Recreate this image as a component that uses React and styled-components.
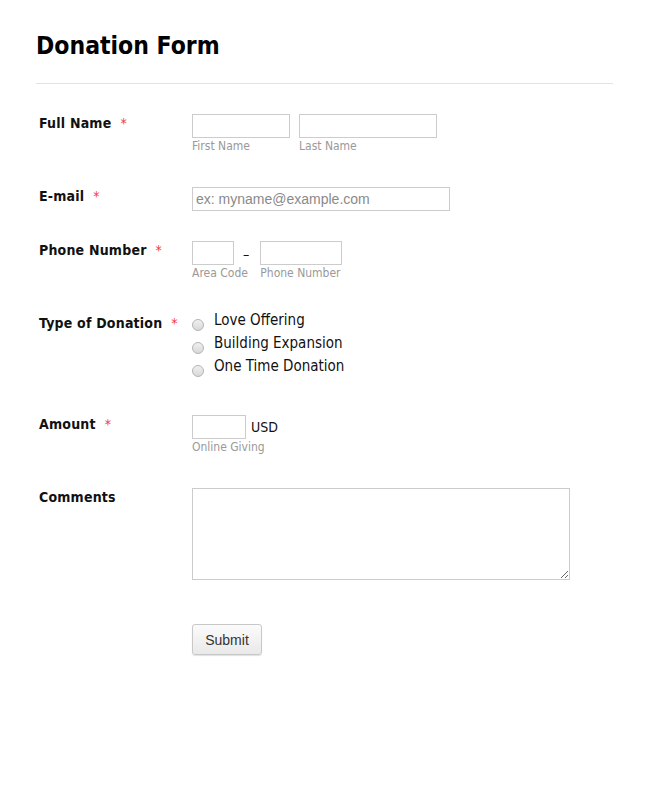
import styled, { createGlobalStyle } from "styled-components"

const Global = createGlobalStyle`
  body {
    margin: 0;
    background: #fff;
    font-family: "DejaVu Sans Condensed", "DejaVu Sans", sans-serif;
    color: #111;
  }
`

const Page = styled.div`
  padding: 29px 37px 0 35px;
`

const Title = styled.h1`
  margin: 0 0 0 1px;
  font-size: 24.5px;
  font-weight: bold;
  line-height: 34px;
  color: #000;
  padding-bottom: 20px;
  border-bottom: 1px solid #e3e3e3;
`

const Fields = styled.div`
  padding-top: 30px;
`

const Row = styled.div`
  display: grid;
  grid-template-columns: 157px 1fr;
  min-height: ${p => p.$h}px;
  align-items: start;
`

const Label = styled.div`
  padding-left: 4px;
  font-size: 14px;
  font-weight: bold;
  letter-spacing: 0.2px;
  line-height: 18px;
  padding-top: ${p => p.$top || 0}px;
  color: #111;
`

const Star = styled.span`
  color: #f23a3c;
  font-weight: normal;
  margin-left: 9px;
`

const Inline = styled.div`
  display: flex;
  align-items: flex-start;
  gap: ${p => p.$gap ?? 9}px;
`

const Stack = styled.div`
  display: flex;
  flex-direction: column;
  width: ${p => (p.$w ? `${p.$w}px` : "auto")};
`

const Input = styled.input`
  box-sizing: border-box;
  width: ${p => p.$w}px;
  height: 24px;
  border: 1px solid #cccccc;
  margin: 0;
  padding: 0 3px;
  font-family: "Liberation Sans", Arial, sans-serif;
  font-size: 14px;
  color: #333;
  outline: none;
  &::placeholder {
    color: #8a8a8a;
  }
`

const Sub = styled.span`
  font-size: 12px;
  color: #999;
  line-height: 14px;
  margin-top: 1px;
  white-space: nowrap;
`

const Dash = styled.span`
  font-size: 14px;
  line-height: 26px;
  margin-right: 2px;
  color: #111;
`

const RadioList = styled.div`
  display: flex;
  flex-direction: column;
  gap: 5px;
  margin-top: -1px;
`

const RadioRow = styled.label`
  display: flex;
  align-items: flex-start;
  gap: 10px;
  height: 18px;
  font-size: 15px;
  line-height: 18px;
  color: #111;
`

const RadioDot = styled.span`
  box-sizing: border-box;
  width: 12px;
  height: 12px;
  margin-top: 8px;
  border-radius: 50%;
  border: 1px solid #b4b4b4;
  background: linear-gradient(#f0f0f0, #d8d8d8);
  flex: none;
`

const Unit = styled.span`
  font-size: 14px;
  line-height: 24px;
  margin-left: 5px;
`

const Area = styled.textarea`
  box-sizing: border-box;
  width: 378px;
  height: 92px;
  border: 1px solid #cccccc;
  margin: 0;
  padding: 3px;
  outline: none;
  font-family: "Liberation Sans", Arial, sans-serif;
`

const Button = styled.button`
  box-sizing: border-box;
  width: 70px;
  height: 31px;
  border: 1px solid #c8c8c8;
  border-radius: 3px;
  background: linear-gradient(#fbfbfb, #e9e9e9);
  box-shadow: 0 1px 1px rgba(0, 0, 0, 0.12);
  font-family: "Liberation Sans", Arial, sans-serif;
  font-size: 14px;
  color: #333;
  padding: 0;
`

function App() {
  return (
    <Page>
      <Global />
      <Title>Donation Form</Title>
      <Fields>
        <Row $h={73}>
          <Label>Full Name<Star>*</Star></Label>
          <Inline>
            <Stack>
              <Input $w={98} />
              <Sub>First Name</Sub>
            </Stack>
            <Stack>
              <Input $w={138} />
              <Sub>Last Name</Sub>
            </Stack>
          </Inline>
        </Row>
        <Row $h={54}>
          <Label>E-mail<Star>*</Star></Label>
          <Input $w={258} placeholder="ex: myname@example.com" />
        </Row>
        <Row $h={71}>
          <Label>Phone Number<Star>*</Star></Label>
          <Inline $gap={9}>
            <Stack $w={42}>
              <Input $w={42} />
              <Sub>Area Code</Sub>
            </Stack>
            <Dash>–</Dash>
            <Stack $w={82}>
              <Input $w={82} />
              <Sub>Phone Number</Sub>
            </Stack>
          </Inline>
        </Row>
        <Row $h={103}>
          <Label $top={2}>Type of Donation<Star>*</Star></Label>
          <RadioList>
            {["Love Offering", "Building Expansion", "One Time Donation"].map(t => (
              <RadioRow key={t}>
                <RadioDot />
                {t}
              </RadioRow>
            ))}
          </RadioList>
        </Row>
        <Row $h={73}>
          <Label>Amount<Star>*</Star></Label>
          <Stack>
            <Inline $gap={0}>
              <Input $w={54} />
              <Unit>USD</Unit>
            </Inline>
            <Sub>Online Giving</Sub>
          </Stack>
        </Row>
        <Row $h={136}>
          <Label>Comments</Label>
          <Area />
        </Row>
        <Row $h={60}>
          <span />
          <div>
            <Button>Submit</Button>
          </div>
        </Row>
      </Fields>
    </Page>
  )
}

export default App
